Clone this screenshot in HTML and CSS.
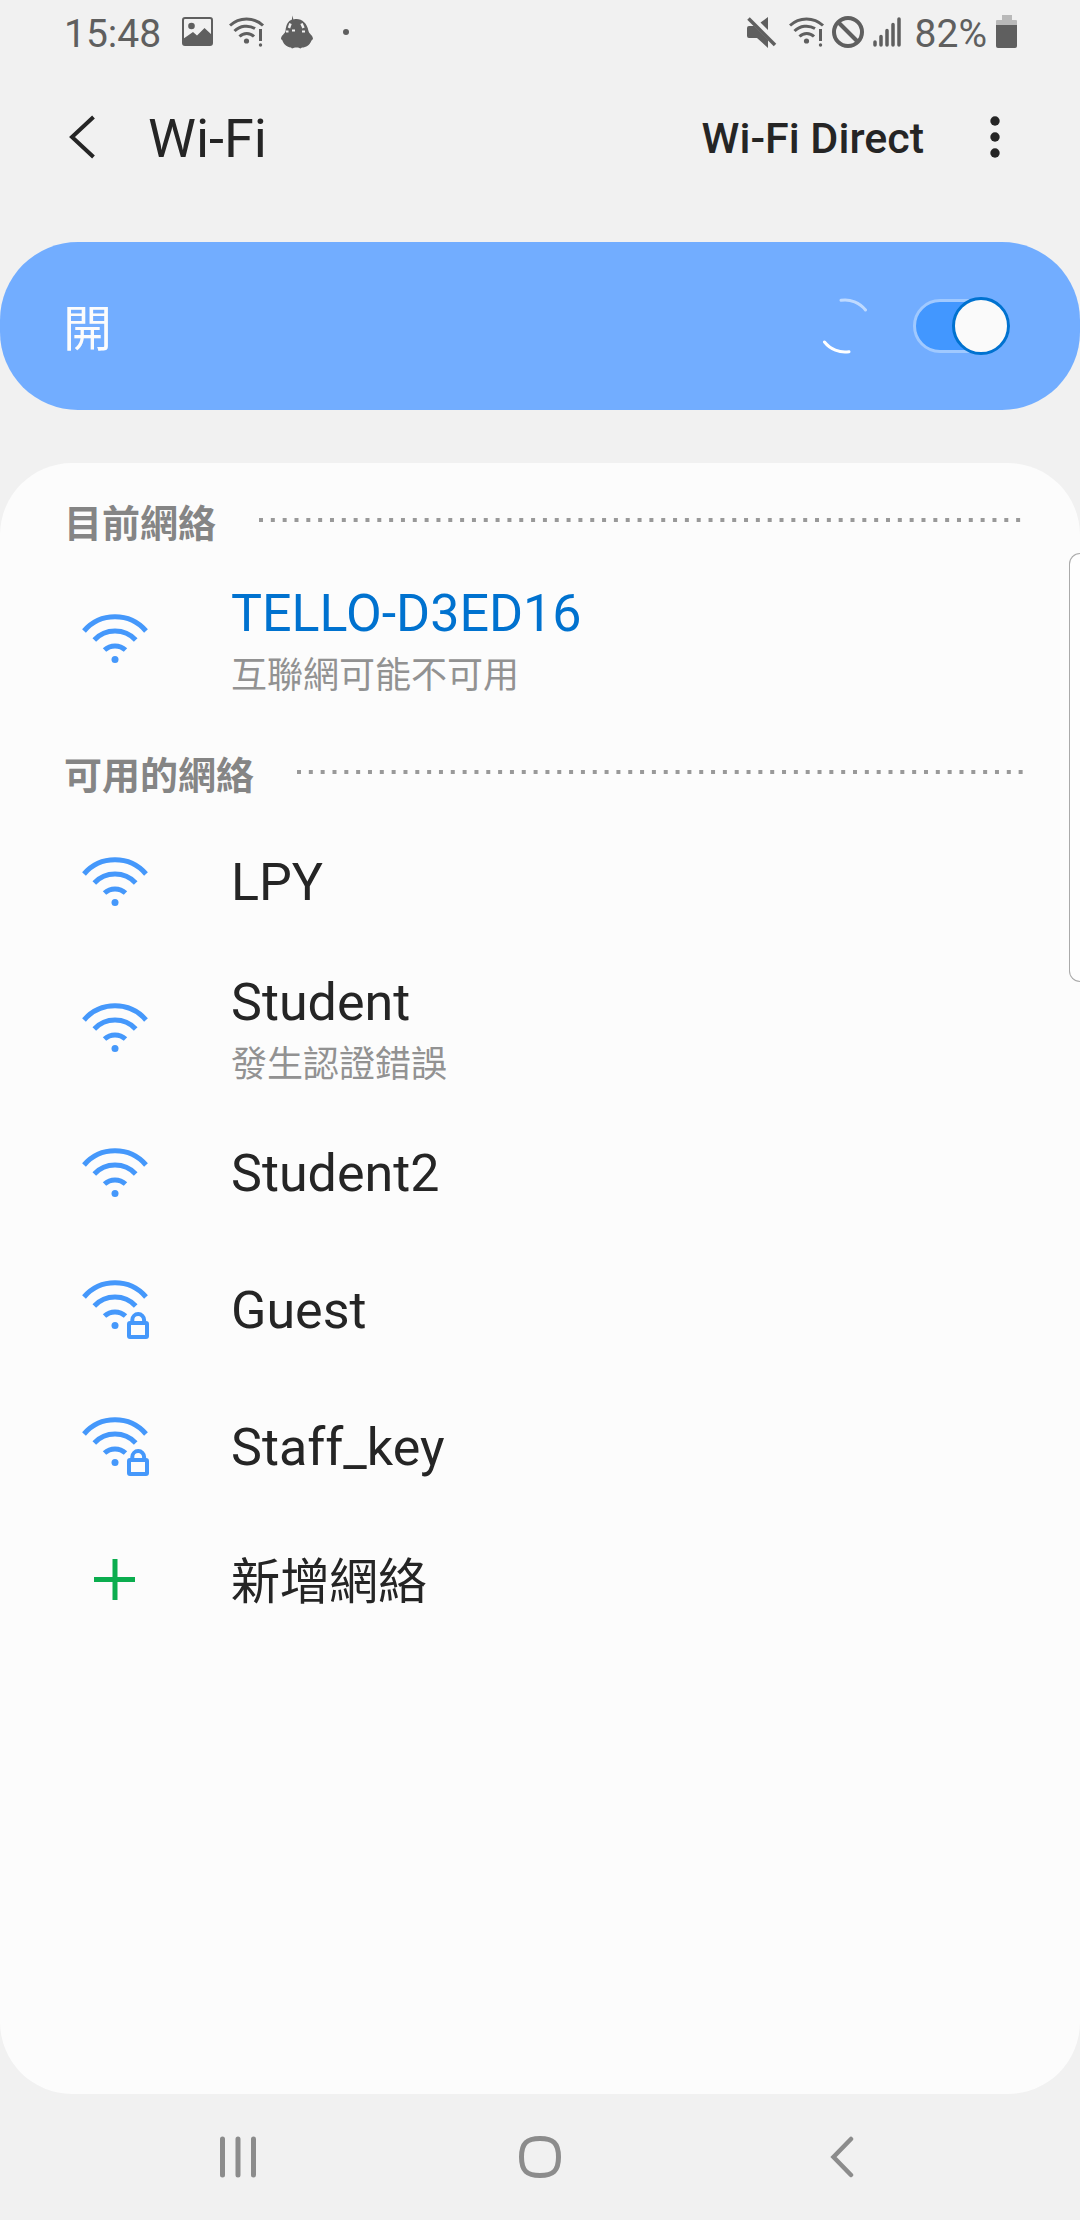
FILE: index.html
```html
<!DOCTYPE html>
<html lang="zh-Hant-HK">
<head>
<meta charset="utf-8">
<meta name="viewport" content="width=device-width, initial-scale=1">
<title>Wi-Fi</title>
<link rel="stylesheet" href="styles.css">
</head>
<body>
<svg class="defs" aria-hidden="true">
  <symbol id="wifi" viewBox="0 0 66 49">
    <g fill="none" stroke="currentColor" stroke-width="5">
      <path d="M2 17A41 41 0 0 1 64 17"/>
      <path d="M12.300 26A28.500 28.500 0 0 1 53.700 26"/>
      <path d="M22.500 36A15.500 15.500 0 0 1 43.500 36"/>
    </g>
    <circle cx="33" cy="45.500" r="3.500" fill="currentColor"/>
  </symbol>
  <symbol id="wifi-lock" viewBox="0 0 68 60">
    <g fill="none" stroke="currentColor" stroke-width="5">
      <path d="M2 17A41 41 0 0 1 64 17"/>
      <path d="M12.300 26A28.500 28.500 0 0 1 53.700 26"/>
      <path d="M22.500 36A15.500 15.500 0 0 1 43.500 36"/>
    </g>
    <circle cx="33" cy="45.500" r="3.500" fill="currentColor"/>
    <g fill="none" stroke="currentColor" stroke-width="4">
      <rect x="47" y="43" width="18" height="14" rx="1"/>
      <path d="M50.300 43V40a5.900 5.900 0 0 1 11.800 0v3"/>
    </g>
  </symbol>
  <symbol id="wifi-alert" viewBox="0 0 36 31">
    <g fill="none" stroke="currentColor" stroke-width="3">
      <path d="M1 8.500A24 24 0 0 1 34 8.500"/>
      <path d="M5.500 14A17 17 0 0 1 26 11.500"/>
      <path d="M10.500 19.500A10 10 0 0 1 25 19.500"/>
      <path d="M31.500 12V24"/>
    </g>
    <circle cx="17.500" cy="24" r="2.600" fill="currentColor"/>
    <circle cx="31.500" cy="28" r="1.700" fill="currentColor"/>
  </symbol>
</svg>

<header class="status">
  <div class="status-left">
    <time class="clock">15:48</time>
    <svg width="32" height="30" viewBox="0 0 32 30"><rect x="1" y="1" width="29" height="27" rx="2" fill="none" stroke="currentColor" stroke-width="2"/><circle cx="9.500" cy="9" r="3.300" fill="currentColor"/><path d="M1 22L11 15L15 18.500L22.500 11L30 18V28H1Z" fill="currentColor"/></svg>
    <svg width="36" height="31"><use href="#wifi-alert"/></svg>
    <svg width="34" height="34" viewBox="0 0 34 34"><path d="M12 .5L13.500 4.500C20 2.500 27 7 28.500 16C29 19 33 20 33 24L31.500 25.500C30 30 26 32.500 22 32.500L20.500 33.500L18 32.500H15L12 33.500L11 32.500C6 32 3 28 2.500 25.500L1 24C1 20 5 19 5.500 16C6 10 8 6 12 4.500Z" fill="currentColor"/><path d="M10.500 8.500L9 13M21.500 8.500L23.500 13" stroke="#f1f1f1" stroke-width="2.500"/><path d="M6 16.500h2.500M12 15.500h3M22 16.500h3" stroke="#f1f1f1" stroke-width="2"/></svg>
    <svg class="more-dot" width="6" height="6" viewBox="0 0 6 6"><circle cx="3" cy="3" r="3" fill="currentColor"/></svg>
  </div>
  <div class="status-right">
    <svg width="30" height="33" viewBox="0 0 30 33"><path d="M0 12Q0 10 2 10H7L21 24V32L10 22H2Q0 22 0 20ZM21 1V14L13.500 6.500Z" fill="currentColor"/><path d="M1.500 2.500L28 29" stroke="currentColor" stroke-width="3.500"/></svg>
    <svg class="wifi-status" width="36" height="31"><use href="#wifi-alert"/></svg>
    <svg width="34" height="34" viewBox="0 0 34 34"><g fill="none" stroke="currentColor" stroke-width="4"><circle cx="17" cy="17" r="14"/><path d="M7 7L27 27"/></g></svg>
    <svg class="signal" width="28" height="30" viewBox="0 0 28 30"><path d="M2 28V25M8 28V19.500M14 28V13.500M20 28V7.500M26 28V2" stroke="currentColor" stroke-width="3.500" stroke-linecap="round"/></svg>
    <span class="level">82%</span>
    <svg class="battery" width="22" height="34" viewBox="0 0 22 34"><path d="M6 0H16V5H20Q21 5 21 6V11H0V6Q0 5 1 5H6Z" fill="#b9b9b9"/><path d="M0 10H21V31Q21 33 19 33H2Q0 33 0 31Z" fill="currentColor"/></svg>
  </div>
</header>

<nav class="appbar">
  <button class="icon-button" aria-label="返回"><svg width="27" height="44" viewBox="0 0 27 44"><path d="M24.500 2L3 22L24.500 42" fill="none" stroke="currentColor" stroke-width="4"/></svg></button>
  <h1>Wi-Fi</h1>
  <button class="direct">Wi-Fi Direct</button>
  <button class="icon-button" aria-label="更多選項"><svg width="10" height="42" viewBox="0 0 10 42"><g fill="currentColor"><circle cx="5" cy="5" r="4.700"/><circle cx="5" cy="21" r="4.700"/><circle cx="5" cy="37" r="4.700"/></g></svg></button>
</nav>

<section class="master">
  <label for="wifi-switch">開</label>
  <svg width="56" height="56" viewBox="0 0 56 56" fill="none" stroke="#fff" stroke-width="3" stroke-linecap="round"><path d="M24 2.300A26 26 0 0 1 48.500 12" opacity=".55"/><path d="M32 53.700A26 26 0 0 1 7.500 44"/></svg>
  <input id="wifi-switch" class="switch" type="checkbox" role="switch" checked>
</section>

<main class="panel">
  <h2>目前網絡<svg height="4" aria-hidden="true"><line x1="0" y1="2" x2="100%" y2="2"/></svg></h2>
  <ul>
    <li><button class="row tall current"><svg width="66" height="49"><use href="#wifi"/></svg><span class="text"><span class="name">TELLO-D3ED16</span><span class="note">互聯網可能不可用</span></span></button></li>
  </ul>
  <h2>可用的網絡<svg height="4" aria-hidden="true"><line x1="0" y1="2" x2="100%" y2="2"/></svg></h2>
  <ul>
    <li><button class="row"><svg width="66" height="49"><use href="#wifi"/></svg><span class="name">LPY</span></button></li>
    <li><button class="row tall"><svg width="66" height="49"><use href="#wifi"/></svg><span class="text"><span class="name">Student</span><span class="note">發生認證錯誤</span></span></button></li>
    <li><button class="row"><svg width="66" height="49"><use href="#wifi"/></svg><span class="name">Student2</span></button></li>
    <li><button class="row"><svg width="68" height="60"><use href="#wifi-lock"/></svg><span class="name">Guest</span></button></li>
    <li><button class="row"><svg width="68" height="60"><use href="#wifi-lock"/></svg><span class="name">Staff_key</span></button></li>
    <li><button class="row add"><svg width="66" height="42" viewBox="0 0 66 42"><path d="M33 0V41M12 20.500H53" stroke="#0bad4e" stroke-width="5"/></svg><span class="name">新增網絡</span></button></li>
  </ul>
</main>

<div class="edge-handle"></div>

<nav class="navbar">
  <button aria-label="最近"><svg width="38" height="42" viewBox="0 0 38 42"><path d="M3.500 3V39M19 3V39M34.500 3V39" stroke="currentColor" stroke-width="5" stroke-linecap="round"/></svg></button>
  <button aria-label="主頁"><svg width="42" height="42" viewBox="0 0 42 42"><path d="M21 2.500C34 2.500 39.500 7 39.500 21S34 39.500 21 39.500S2.500 35 2.500 21S8 2.500 21 2.500Z" fill="none" stroke="currentColor" stroke-width="5"/></svg></button>
  <button aria-label="返回"><svg width="24" height="42" viewBox="0 0 24 42"><path d="M21 3L3.500 21L21 39" fill="none" stroke="currentColor" stroke-width="4.500" stroke-linecap="round"/></svg></button>
</nav>
</body>
</html>
```
FILE: styles.css
```css
*,
*::before {
  box-sizing: border-box;
}

body {
  margin: 0;
  min-height: 100vh;
  position: relative;
  display: flex;
  flex-direction: column;
  background: #f1f1f1;
  color: #252525;
  font-family: Roboto, "Noto Sans CJK TC", sans-serif;
}

.defs {
  display: none;
}

svg {
  flex: none;
}

h1, h2, ul {
  margin: 0;
  padding: 0;
}

ul {
  list-style: none;
}

button {
  padding: 0;
  border: 0;
  background: none;
  color: inherit;
  font: inherit;
}

/* Status bar */
.status {
  height: 64px;
  padding: 0 62px 0 64px;
  display: flex;
  justify-content: space-between;
  align-items: center;
  color: #5f5f5f;
  font-size: 39px;
  line-height: 60px;
}

.status-left,
.status-right {
  display: flex;
  align-items: center;
}

.status-left {
  gap: 15px;
}

.clock,
.level {
  padding-top: 4px;
}

.clock {
  margin-right: 6px;
}

.more-dot {
  margin-left: 14px;
}

.wifi-status {
  margin: 0 6px 0 12px;
}

.signal {
  margin: 0 14px 0 8px;
}

.battery {
  margin-left: 9px;
}

/* Title bar */
.appbar {
  height: 146px;
  margin-bottom: 32px;
  padding: 0 80px 0 69px;
  display: flex;
  align-items: center;
}

.icon-button {
  display: flex;
}

h1 {
  flex: 1;
  margin-left: 52px;
  padding-top: 4px;
  font-size: 54px;
  font-weight: 400;
  line-height: 64px;
}

.direct {
  margin-right: 66px;
  padding-top: 2px;
  font-size: 43px;
  font-weight: 500;
}

/* Master switch */
.master {
  height: 168px;
  margin-bottom: 53px;
  padding: 0 70px 0 63px;
  display: flex;
  align-items: center;
  border-radius: 78px;
  background: #72adff;
  color: #fcfcfc;
}

.master label {
  flex: 1;
  padding-bottom: 4px;
  font-size: 49px;
}

.switch {
  appearance: none;
  display: flex;
  width: 97px;
  height: 54px;
  margin: 0 0 0 40px;
  border: 3px solid #a0c9ff;
  border-radius: 27px;
  background: #4297ff;
}

.switch::before {
  content: "";
  flex: none;
  width: 58px;
  height: 58px;
  margin: -5px -3px -5px auto;
  border: 3px solid #0072d0;
  border-radius: 50%;
  background: #fafafa;
}

.switch:not(:checked)::before {
  margin-left: -3px;
}

/* Network list */
.panel {
  flex: 1;
  border-radius: 72px;
  background: #fcfcfc;
}

h2 {
  height: 98px;
  padding: 16px 56px 0 64px;
  display: flex;
  align-items: center;
  gap: 43px;
  color: #858585;
  font-size: 38px;
  font-weight: 700;
}

h2 svg {
  flex: 1;
  min-width: 0;
}

h2 line {
  stroke: #999;
  stroke-width: 4px;
  stroke-dasharray: 4 7.83;
}

.row {
  width: 100%;
  height: 137px;
  padding: 0 56px 0 82px;
  display: grid;
  grid-template-columns: 66px 1fr;
  gap: 83px;
  align-items: center;
  text-align: left;
}

.row svg {
  color: #4598fb;
}

.tall {
  height: 154px;
}

.add {
  height: 130px;
}

.text {
  padding-top: 5px;
  display: flex;
  flex-direction: column;
  gap: 5px;
}

.name {
  padding-top: 3px;
  font-size: 52px;
  line-height: 62px;
}

.add .name {
  padding-top: 6px;
  font-size: 49px;
}

.note {
  color: #929292;
  font-size: 36px;
  line-height: 52px;
}

.current .name {
  color: #0072cf;
}

/* Edge panel handle floats over the right side of the screen */
.edge-handle {
  position: absolute;
  top: 553px;
  right: 0;
  width: 11px;
  height: 429px;
  border: 1px solid #aaa;
  border-right: 0;
  border-radius: 14px 0 0 14px;
  background: #fefefe;
}

/* System navigation */
.navbar {
  height: 126px;
  padding: 0 87px;
  display: grid;
  grid-template-columns: repeat(3, 1fr);
  color: #8c8c8c;
}

.navbar button {
  display: flex;
  align-items: center;
  justify-content: center;
}
```
